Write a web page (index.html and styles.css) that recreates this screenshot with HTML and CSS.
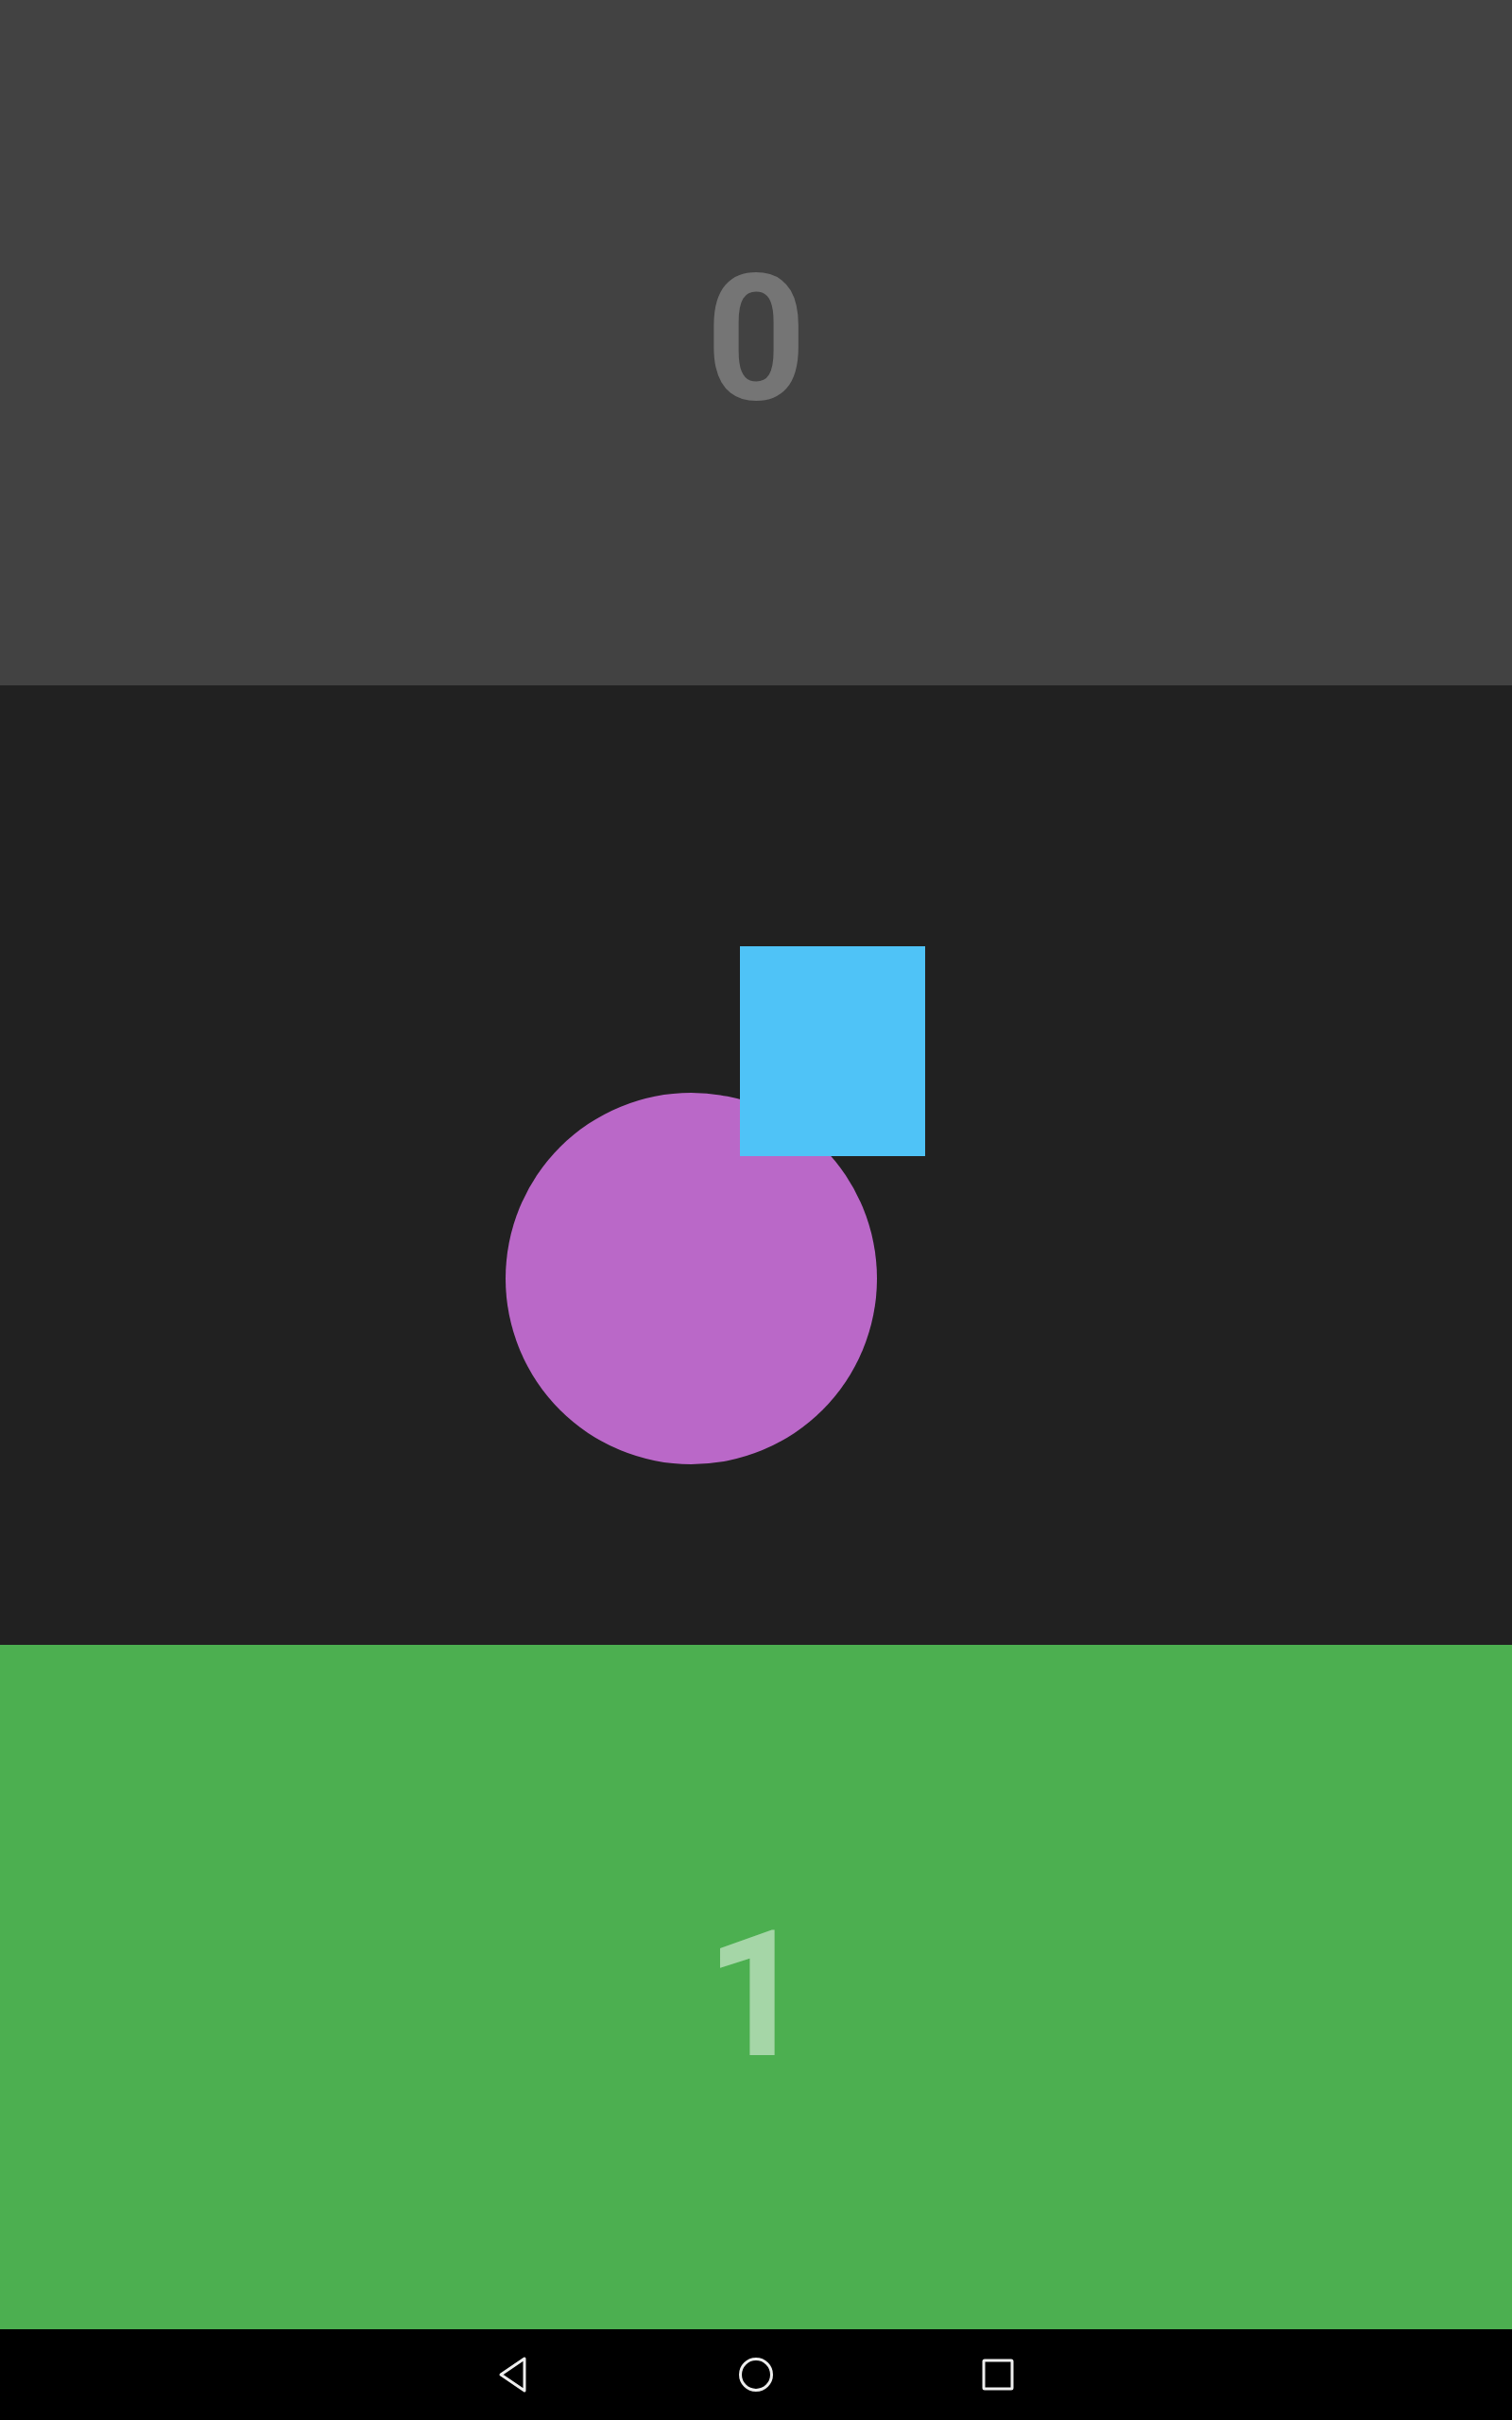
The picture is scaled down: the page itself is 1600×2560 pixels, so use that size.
FILE: index.html
```html
<!DOCTYPE html>
<html>
<head>
<meta charset="utf-8">
<link rel="stylesheet" href="styles.css">
</head>
<body>
<div class="screen">
  <section class="panel panel-top"><span class="digit digit-gray">0</span></section>
  <section class="panel panel-canvas">
    <div class="shape circle"></div>
    <div class="shape rect"></div>
  </section>
  <section class="panel panel-green"><span class="digit digit-green">1</span></section>
  <nav class="navbar">
    <svg class="nav-icon" width="40" height="40" viewBox="0 0 40 40"><path d="M31 3 L31 37 L6 20 Z" fill="none" stroke="#eeeeee" stroke-width="3" stroke-linejoin="round"/></svg>
    <svg class="nav-icon" width="40" height="40" viewBox="0 0 40 40"><circle cx="20" cy="20" r="16.5" fill="none" stroke="#eeeeee" stroke-width="3"/></svg>
    <svg class="nav-icon" width="40" height="40" viewBox="0 0 40 40"><rect x="5" y="5" width="30" height="30" rx="1" fill="none" stroke="#eeeeee" stroke-width="3"/></svg>
  </nav>
</div>
</body>
</html>
```

FILE: styles.css
```css
html, body {
  margin: 0;
  padding: 0;
  background: #000;
}
.screen {
  width: 1600px;
  height: 2560px;
  display: flex;
  flex-direction: column;
  font-family: Roboto, "Liberation Sans", sans-serif;
}
.panel {
  display: flex;
  align-items: center;
  justify-content: center;
  flex: none;
}
.panel-top {
  height: 725px;
  background: #424242;
}
.panel-canvas {
  height: 1015px;
  background: #212121;
  position: relative;
}
.panel-green {
  height: 724px;
  background: #4caf50;
}
.digit {
  font-size: 186px;
  font-weight: 700;
  line-height: 1;
}
.digit-gray {
  color: #757575;
  margin-bottom: 10px;
}
.digit-green {
  color: #a5d6a7;
  margin-top: 16px;
}
.shape {
  position: absolute;
}
.circle {
  left: 535px;
  top: 431px;
  width: 393px;
  height: 393px;
  border-radius: 50%;
  background: #ba68c8;
}
.rect {
  left: 783px;
  top: 276px;
  width: 196px;
  height: 222px;
  background: #4fc3f7;
}
.navbar {
  height: 96px;
  background: #000;
  display: flex;
  align-items: center;
  justify-content: center;
  gap: 216px;
  flex: none;
}
.nav-icon {
  display: block;
}
```
